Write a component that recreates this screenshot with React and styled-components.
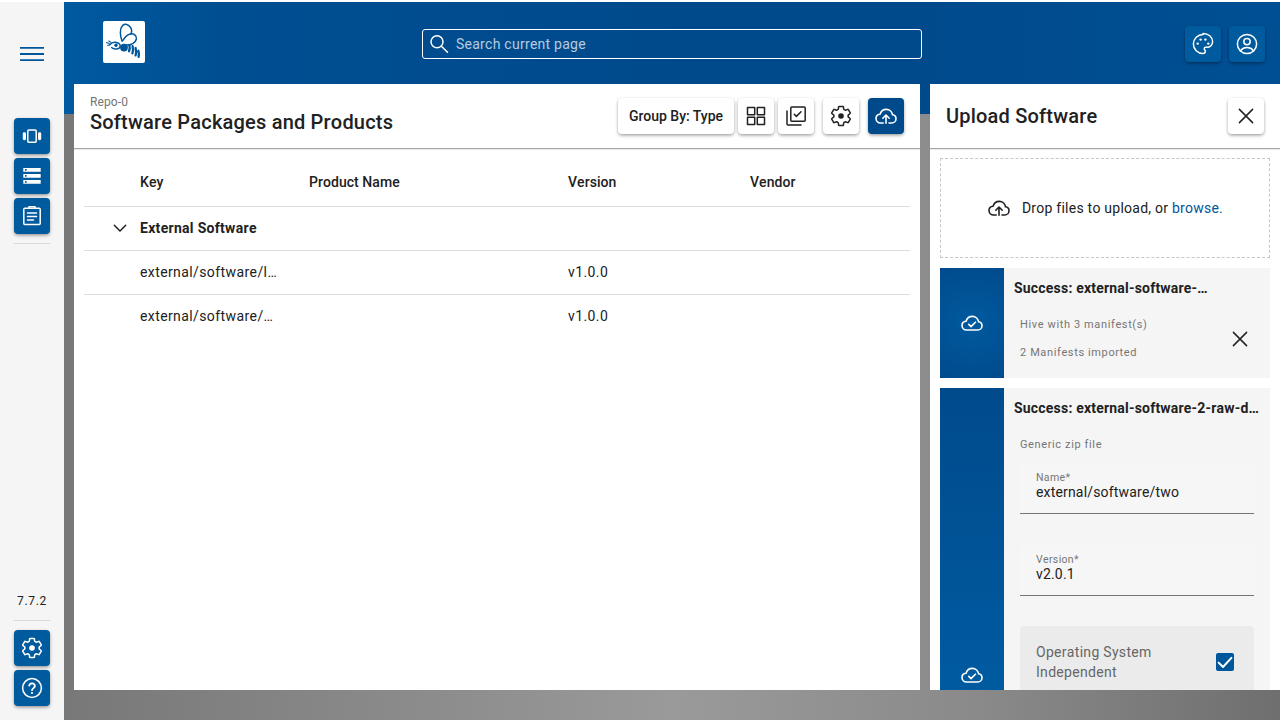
import React from "react";
import styled, { createGlobalStyle } from "styled-components";

const Global = createGlobalStyle`
  html, body { margin: 0; height: 100%; overflow: hidden; background: #fff; }
  body { font-family: Roboto, "Liberation Sans", sans-serif; color: #212121; font-kerning: none; }
  * { box-sizing: border-box; }
`;

const Glyph = styled.svg.attrs({ viewBox: "0 0 24 24", width: 24, height: 24, fill: "none", stroke: "currentColor" })`
  flex: none; display: block; stroke-width: ${p => p.$sw || 1.5}; stroke-linecap: round; stroke-linejoin: round;
`;
const Solid = styled.g`fill: currentColor; stroke: none;`;

const GEAR = "M19.14 12.94c.04-.3.06-.61.06-.94 0-.32-.02-.64-.07-.94l2.03-1.58c.18-.14.23-.41.12-.61l-1.92-3.32c-.12-.22-.37-.29-.59-.22l-2.39.96c-.5-.38-1.03-.7-1.62-.94l-.36-2.54c-.04-.24-.24-.41-.48-.41h-3.84c-.24 0-.43.17-.47.41l-.36 2.54c-.59.24-1.13.57-1.62.94l-2.39-.96c-.22-.08-.47 0-.59.22L2.74 8.87c-.12.21-.08.47.12.61l2.03 1.58c-.05.3-.09.63-.09.94s.02.64.07.94l-2.03 1.58c-.18.14-.23.41-.12.61l1.92 3.32c.12.22.37.29.59.22l2.39-.96c.5.38 1.03.7 1.62.94l.36 2.54c.05.24.24.41.48.41h3.84c.24 0 .44-.17.47-.41l.36-2.54c.59-.24 1.13-.56 1.62-.94l2.39.96c.22.08.47 0 .59-.22l1.92-3.32c.12-.22.07-.47-.12-.61l-2.01-1.58z";
const CLOUD = "M6.6 19C4 19 2 17 2 14.6c0-2.3 1.7-4.2 4-4.4C6.9 7.6 9.2 5.4 12.3 5.4c3.4 0 5.9 2.5 6.2 5.4 2 .3 3.5 1.9 3.5 3.9 0 2.4-1.9 4.3-4.3 4.3";

const IconVibration = () => (
  <Glyph>
    <rect x="7.8" y="6" width="8.4" height="12.2" rx="1" />
    <Solid>
      <rect x="2.8" y="8.2" width="3.2" height="8" rx="1.4" />
      <rect x="18" y="8.2" width="3.2" height="8" rx="1.4" />
    </Solid>
  </Glyph>
);
const IconDns = () => (
  <Glyph>
    <Solid>
      <path fillRule="evenodd" d="M3.3 4h17.4v3.8H3.3zM5 5.1h1.6v1.6H5z" />
      <path fillRule="evenodd" d="M3.3 10h17.4v3.8H3.3zM5 11.1h1.6v1.6H5z" />
      <path fillRule="evenodd" d="M3.3 16h17.4v3.8H3.3zM5 17.1h1.6v1.6H5z" />
    </Solid>
  </Glyph>
);
const IconAssignment = () => (
  <Glyph>
    <rect x="3.8" y="4.2" width="16.4" height="16.4" rx="1" />
    <path d="M9 4.2V2.8h6v1.4M7.5 9h9M7.5 12.5h9M7.5 16h6" />
  </Glyph>
);
const IconGear = () => (
  <Glyph><path d={GEAR} /><Solid><circle cx="12" cy="12" r="2.8" /></Solid></Glyph>
);
const IconHelp = () => (
  <Glyph>
    <circle cx="12" cy="12" r="9.4" />
    <path d="M9.2 9.6a2.9 2.9 0 0 1 5.7.4c0 1.9-2.9 2.3-2.9 4.2" strokeWidth="1.8" />
    <Solid><circle cx="12" cy="17" r="1.1" /></Solid>
  </Glyph>
);
const IconSearch = () => (
  <Glyph>
    <circle cx="10" cy="9.8" r="6" />
    <path d="M14.4 14.2 20.5 20.3" />
  </Glyph>
);
const IconPalette = () => (
  <Glyph>
    <path d="M12 2.4C6.7 2.4 2.4 6.7 2.4 12s4.3 9.6 9.6 9.6c1.3 0 2.3-1 2.3-2.3 0-.6-.2-1.1-.6-1.5-.3-.4-.5-.7-.5-1.1 0-.8.6-1.4 1.4-1.4H16c3.1 0 5.6-2.5 5.6-5.6 0-4.7-4.3-8.3-9.6-8.3z" />
    <Solid>
      <circle cx="6.7" cy="11.6" r="1.2" /><circle cx="9.6" cy="7.6" r="1.2" />
      <circle cx="14.4" cy="7.6" r="1.2" /><circle cx="17.3" cy="11.6" r="1.2" />
    </Solid>
  </Glyph>
);
const IconAccount = () => (
  <Glyph>
    <circle cx="12" cy="12" r="9.6" />
    <circle cx="12" cy="9.6" r="3.2" />
    <path d="M5.4 18.8C7.2 16.6 9.4 15.6 12 15.6s4.8 1 6.6 3.2" />
  </Glyph>
);
const IconGrid = () => (
  <Glyph>
    <rect x="3.5" y="3.5" width="7.2" height="7.2" /><rect x="13.3" y="3.5" width="7.2" height="7.2" />
    <rect x="3.5" y="13.3" width="7.2" height="7.2" /><rect x="13.3" y="13.3" width="7.2" height="7.2" />
  </Glyph>
);
const IconLibraryCheck = () => (
  <Glyph>
    <rect x="6.8" y="3" width="14.4" height="14.2" rx="1" />
    <path d="M3 7v13a1 1 0 0 0 1 1h13" />
    <path d="M10.2 10.2l2.2 2.2 4.6-4.6" />
  </Glyph>
);
const IconCloudUp = () => (
  <Glyph $sw={1.6}>
    <path d={CLOUD + "H15M9.2 19H6.6"} />
    <path d="M12 19.2v-8M8.8 14.2 12 11l3.2 3.2" />
  </Glyph>
);
const IconCloudDone = () => (
  <Glyph $sw={1.6}>
    <path d={CLOUD + "z"} />
    <path d="M8.8 13.4 11 15.6l4.4-4.4" />
  </Glyph>
);
const IconClose = () => (
  <Glyph><path d="M5.4 5.4 18.6 18.6M18.6 5.4 5.4 18.6" /></Glyph>
);
const IconChevron = () => (
  <Glyph><path d="M6.3 9.3 12 15l5.7-5.7" /></Glyph>
);
const IconCheck = () => (
  <Glyph $sw={2}><path d="M5.6 12.6 10 17l8.4-9.2" /></Glyph>
);
const IconMenu = () => (
  <svg width="24" height="14" viewBox="0 0 24 14"><path d="M0 .9h24M0 7h24M0 13.1h24" stroke="currentColor" strokeWidth="1.8" /></svg>
);
const Bee = () => (
  <svg width="42" height="42" viewBox="0 0 42 42" fill="none" stroke="#00569b">
    <path d="M19.2 20.5C17 15 16.4 8 19.5 4.6c2.4-2.2 6-1.6 8.2 2 1.4 2.6 1.2 5-.3 7" strokeWidth="1.5" />
    <path d="M19.2 20.5c2-3.5 4.6-6.6 8-7.5 3.4-.8 6.8 1.5 6.2 5-.6 3.6-5.8 6.5-10.6 6" strokeWidth="1.5" />
    <circle cx="21" cy="26.6" r="3.9" fill="#00569b" stroke="none" />
    <path d="M6.4 24c2.2-2.4 6-3.2 9-1.8 2 1 2.4 3.4.8 5-2.4 1.6-6 1-8-1" strokeWidth="1.5" fill="#fff" />
    <circle cx="13" cy="24.2" r="1.7" fill="#00569b" stroke="none" />
    <path d="M3 21.5l3.6 1M4.2 24.5l3-.8M5.5 19.8l2.8 1.8" strokeWidth="1.1" />
    <path d="M26.4 24.2c.6 2.4.4 4.2-.4 6M29.6 25.2c.8 2.8.6 5-.2 7.2M32.6 27c.8 2.6.8 5 0 7.4M35.4 29.8c.6 1.8.6 3.8.2 6" strokeWidth="2.3" strokeLinecap="round" />
  </svg>
);

const Shell = styled.div`
  width: 1280px; height: 720px; padding-top: 2px; display: flex; overflow: hidden;
`;
const Sidebar = styled.nav`
  width: 64px; flex: none; background: #f5f5f5; display: flex; flex-direction: column; align-items: center;
  padding-bottom: 14px;
`;
const Burger = styled.div`
  height: 104px; padding-top: 45px; display: flex; justify-content: center; color: #00569b;
`;
const NavGroup = styled.div`
  display: flex; flex-direction: column; gap: 4px; margin-top: ${p => p.$top || 0}px;
`;
const Divider = styled.div`
  width: 36px; height: 1px; background: #d9d9d9; margin: ${p => p.$m};
`;
const Spacer = styled.div`flex: 1;`;
const VersionText = styled.div`
  font-size: 12px; line-height: 16px; letter-spacing: 0.7px; color: #212121;
`;
const IconButton = styled.button`
  width: 36px; height: 36px; flex: none; border: 0; border-radius: 4px; padding: 0; cursor: pointer;
  display: flex; align-items: center; justify-content: center;
  background: ${p => p.$bg || "#005a9e"}; color: ${p => p.$fg || "#fff"};
  box-shadow: 0 2px 4px -1px rgba(0,0,0,.3), 0 1px 3px rgba(0,0,0,.2);
`;
const Main = styled.div`
  flex: 1; min-width: 0; display: flex; flex-direction: column;
  background:
    linear-gradient(90deg, #005a9f 0%, #004e92 13%, #004a8c 50%, #004a8c 70%, #004f94 100%) top / 100% 112px no-repeat,
    linear-gradient(90deg, #787878 0%, #8c8c8c 30%, #9a9a9a 50%, #8a8a8a 75%, #6f6f6f 100%);
`;
const Header = styled.header`
  height: 82px; flex: none; display: flex; align-items: flex-start;
`;
const Logo = styled.div`
  width: 42px; height: 42px; margin: 19px 0 0 39px; background: #fff; border-radius: 2px; flex: none;
`;
const Search = styled.div`
  width: 500px; height: 30px; margin: 27px 0 0 277px; border: 1px solid #fff; border-radius: 3px;
  display: flex; align-items: center; gap: 5px; padding-left: 4px; color: #fff; flex: none;
`;
const Placeholder = styled.span`
  font-size: 14px; letter-spacing: 0.25px; color: rgba(255,255,255,.72);
`;
const HeaderActions = styled.div`
  margin: 24px 15px 0 auto; display: flex; gap: 8px;
`;
const Panels = styled.div`
  flex: 1; min-height: 0; display: flex; gap: 10px; padding: 0 0 30px 10px;
`;
const Panel = styled.section`
  width: ${p => p.$w}px; flex: none; background: #fff; display: flex; flex-direction: column; overflow: hidden;
`;
const PanelHead = styled.div`
  height: 65px; flex: none; display: flex; align-items: center; padding: 0 16px;
  border-bottom: 1px solid #a6a6a6; box-shadow: 0 1px 1px rgba(0,0,0,.08);
`;
const TitleBlock = styled.div`display: flex; flex-direction: column; flex: 1; padding-bottom: 2px;`;
const Crumb = styled.div`font-size: 12px; line-height: 14px; letter-spacing: 0.1px; color: #757575;`;
const Title = styled.h1`
  margin: 0; font-size: 20px; line-height: 26px; font-weight: 500; letter-spacing: 0.2px; color: #212121;
`;
const SideTitle = styled(Title)`flex: 1;`;
const Toolbar = styled.div`display: flex; align-items: center; padding-bottom: 1px;`;
const ToolItem = styled.div`margin-left: ${p => p.$ml}px;`;
const TextButton = styled.button`
  width: 116px; height: 36px; padding: 0; border: 0; border-radius: 4px; background: #fff; color: #212121;
  font: 500 14px Roboto, sans-serif; white-space: nowrap;
  box-shadow: 0 2px 4px -1px rgba(0,0,0,.3), 0 1px 3px rgba(0,0,0,.2);
`;
const TableWrap = styled.div`padding: 10px 10px 0;`;
const Row = styled.div`
  display: grid; grid-template-columns: 56px 169px 259px 182px 1fr; align-items: center;
  height: ${p => p.$h || 44}px; padding-bottom: 2px; font-size: 14px;
  letter-spacing: ${p => p.$head ? "0.05px" : p.$bold ? "0.3px" : "0.4px"};
  font-weight: ${p => p.$head ? 500 : p.$bold ? 700 : 400};
  border-bottom: ${p => p.$last ? "0" : "1px solid #dcdcdc"}; color: #212121;
`;
const Chevron = styled.div`display: flex; justify-content: flex-end; padding-right: 8px;`;
const Cell = styled.div`
  white-space: nowrap; overflow: hidden; text-overflow: ellipsis; padding-right: ${p => p.$pr || 0}px;
`;
const HeadAction = styled.div`margin-bottom: 1px;`;
const PanelBody = styled.div`
  flex: 1; min-height: 0; overflow: hidden; padding: 9px 10px; display: flex; flex-direction: column; gap: 10px;
`;
const Drop = styled.div`
  height: 100px; flex: none; border: 1px dashed #c6c6c6; display: flex; align-items: center; justify-content: center; gap: 11px;
  font-size: 14px; letter-spacing: 0.24px; color: #212121;
`;
const Browse = styled.span`color: #00569b;`;
const Card = styled.article`
  flex: none; display: flex; background: #f5f5f5; min-height: ${p => p.$h}px;
`;
const Strip = styled.div`
  width: 64px; flex: none; color: #fff; display: flex; align-items: center; justify-content: center;
  background: ${p => p.$bg};
`;
const CardBody = styled.div`flex: 1; min-width: 0; padding: 10px 10px 0;`;
const CardTitle = styled.div`
  font-size: 14px; line-height: 20px; font-weight: 700; letter-spacing: 0.2px; white-space: nowrap; overflow: hidden; text-overflow: ellipsis;
  width: ${p => p.$w}px; color: #212121;
`;
const CardRow = styled.div`display: flex; align-items: center; justify-content: space-between; padding: 13px 8px 0 6px;`;
const Notes = styled.div`display: flex; flex-direction: column;`;
const Note = styled.div`
  font-size: 11px; line-height: 28px; letter-spacing: 0.62px; color: #757575;
`;
const Form = styled.div`padding: 13px 6px 0; display: flex; flex-direction: column;`;
const Field = styled.div`
  height: 51px; padding: 8px 16px 0; margin-top: ${p => p.$mt || 0}px; background: #f6f6f6; border-bottom: 1px solid #757575; margin-bottom: ${p => p.$mb}px;
`;
const FieldLabel = styled.div`font-size: 10.5px; line-height: 13px; letter-spacing: 0.35px; color: #757575;`;
const FieldValue = styled.div`font-size: 14px; line-height: 17px; letter-spacing: 0.17px; color: #212121;`;
const CheckRow = styled.div`
  min-height: 72px; background: #ebebeb; border-radius: 4px; padding: 16px 20px 16px 16px;
  display: flex; align-items: flex-start; justify-content: space-between;
`;
const CheckText = styled.div`font-size: 14px; line-height: 20px; letter-spacing: 0.3px; color: #666; width: 150px;`;
const Box = styled.div`
  width: 18px; height: 18px; margin-top: 11px; border-radius: 2px; background: #00569b; color: #fff; overflow: hidden;
  display: flex; align-items: center; justify-content: center;
`;

export default function App() {
  return (
    <Shell>
      <Global />
      <Sidebar>
        <Burger><IconMenu /></Burger>
        <NavGroup $top={12}>
          <IconButton><IconVibration /></IconButton>
          <IconButton><IconDns /></IconButton>
          <IconButton><IconAssignment /></IconButton>
        </NavGroup>
        <Divider $m="9px 0 0" />
        <Spacer />
        <VersionText>7.7.2</VersionText>
        <Divider $m="11px 0 9px" />
        <NavGroup>
          <IconButton><IconGear /></IconButton>
          <IconButton><IconHelp /></IconButton>
        </NavGroup>
      </Sidebar>
      <Main>
        <Header>
          <Logo><Bee /></Logo>
          <Search><IconSearch /><Placeholder>Search current page</Placeholder></Search>
          <HeaderActions>
            <IconButton><IconPalette /></IconButton>
            <IconButton><IconAccount /></IconButton>
          </HeaderActions>
        </Header>
        <Panels>
          <Panel $w={846}>
            <PanelHead>
              <TitleBlock>
                <Crumb>Repo-0</Crumb>
                <Title>Software Packages and Products</Title>
              </TitleBlock>
              <Toolbar>
                <TextButton>Group By: Type</TextButton>
                <ToolItem $ml={4}><IconButton $bg="#fff" $fg="#212121"><IconGrid /></IconButton></ToolItem>
                <ToolItem $ml={4}><IconButton $bg="#fff" $fg="#212121"><IconLibraryCheck /></IconButton></ToolItem>
                <ToolItem $ml={9}><IconButton $bg="#fff" $fg="#212121"><IconGear /></IconButton></ToolItem>
                <ToolItem $ml={9}><IconButton $bg="#004a8c"><IconCloudUp /></IconButton></ToolItem>
              </Toolbar>
            </PanelHead>
            <TableWrap>
              <Row $head $h={48}>
                <span /><Cell>Key</Cell><Cell>Product Name</Cell><Cell>Version</Cell><Cell>Vendor</Cell>
              </Row>
              <Row $bold>
                <Chevron><IconChevron /></Chevron><Cell>External Software</Cell><span /><span /><span />
              </Row>
              <Row>
                <span /><Cell $pr={32}>external/software/lib-one</Cell><span /><Cell>v1.0.0</Cell><span />
              </Row>
              <Row $last>
                <span /><Cell $pr={32}>external/software/two-long</Cell><span /><Cell>v1.0.0</Cell><span />
              </Row>
            </TableWrap>
          </Panel>
          <Panel $w={350}>
            <PanelHead>
              <SideTitle as="h2">Upload Software</SideTitle>
              <HeadAction><IconButton $bg="#fff" $fg="#212121"><IconClose /></IconButton></HeadAction>
            </PanelHead>
            <PanelBody>
              <Drop>
                <IconCloudUp />
                <span>Drop files to upload, or <Browse>browse.</Browse></span>
              </Drop>
              <Card $h={110}>
                <Strip $bg="radial-gradient(circle at 50% 50%, #005a9f, #004a8c)"><IconCloudDone /></Strip>
                <CardBody>
                  <CardTitle $w={196}>Success: external-software-1-hive.zip</CardTitle>
                  <CardRow>
                    <Notes>
                      <Note>Hive with 3 manifest(s)</Note>
                      <Note>2 Manifests imported</Note>
                    </Notes>
                    <IconClose />
                  </CardRow>
                </CardBody>
              </Card>
              <Card $h={574}>
                <Strip $bg="linear-gradient(180deg, #004a8c, #005a9f 50%)"><IconCloudDone /></Strip>
                <CardBody>
                  <CardTitle $w={246}>Success: external-software-2-raw-data.zip</CardTitle>
                  <Form>
                    <Note>Generic zip file</Note>
                    <Field $mt={4} $mb={31}>
                      <FieldLabel>Name*</FieldLabel>
                      <FieldValue>external/software/two</FieldValue>
                    </Field>
                    <Field $mb={30}>
                      <FieldLabel>Version*</FieldLabel>
                      <FieldValue>v2.0.1</FieldValue>
                    </Field>
                    <CheckRow>
                      <CheckText>Operating System Independent</CheckText>
                      <Box><IconCheck /></Box>
                    </CheckRow>
                  </Form>
                </CardBody>
              </Card>
            </PanelBody>
          </Panel>
        </Panels>
      </Main>
    </Shell>
  );
}
